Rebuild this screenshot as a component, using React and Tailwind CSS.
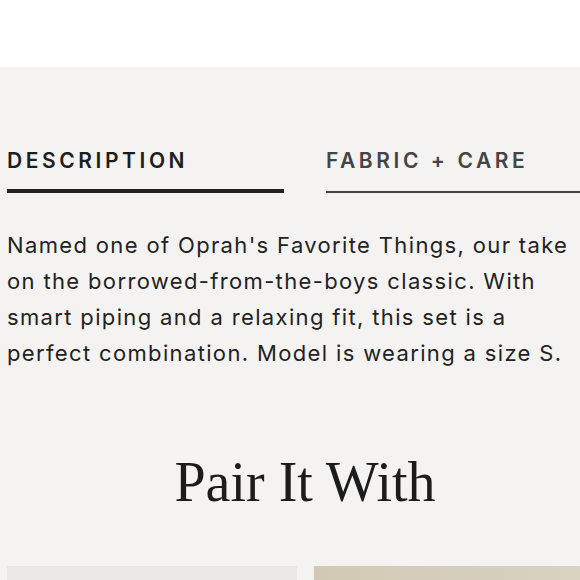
import React from "react";

export default function App() {
  return (
    <div className="w-[580px] h-[580px] overflow-hidden bg-[#f4f3f1]">
      <div className="h-[67px] bg-white" />
      <div className="w-[596px] ml-[7px] pt-[80px]">
        <div className="flex items-end gap-[42px] font-['Inter',sans-serif] text-[21px] leading-[28px] font-semibold tracking-[0.17em]">
          <div className="w-[277px] shrink-0 border-b-4 border-[#222] pb-[14px] text-[#1e1e1e]">
            DESCRIPTION
          </div>
          <div className="w-[277px] shrink-0 border-b-2 border-[#444] pb-[16px] text-[#444]">
            FABRIC + CARE
          </div>
        </div>
        <p className="mt-[34px] w-[575px] font-['Inter',sans-serif] text-[22px] leading-[36px] tracking-[1.35px] text-[#222]">
          Named one of Oprah's Favorite Things, our take on the borrowed-from-the-boys classic. With smart piping and a relaxing fit, this set is a perfect combination. Model is wearing a size S.
        </p>
        <h2 className="mt-[83px] text-center font-['Liberation_Serif',serif] text-[56px] leading-none text-[#1c1c1c]">
          Pair It With
        </h2>
        <div className="mt-[56px] grid grid-cols-2 gap-[17px]">
          <div className="h-[120px] bg-[#e9e7e3]" />
          <div className="h-[120px] bg-gradient-to-r from-[#d2c9b4] to-[#d9d3c0]" />
        </div>
      </div>
    </div>
  );
}
